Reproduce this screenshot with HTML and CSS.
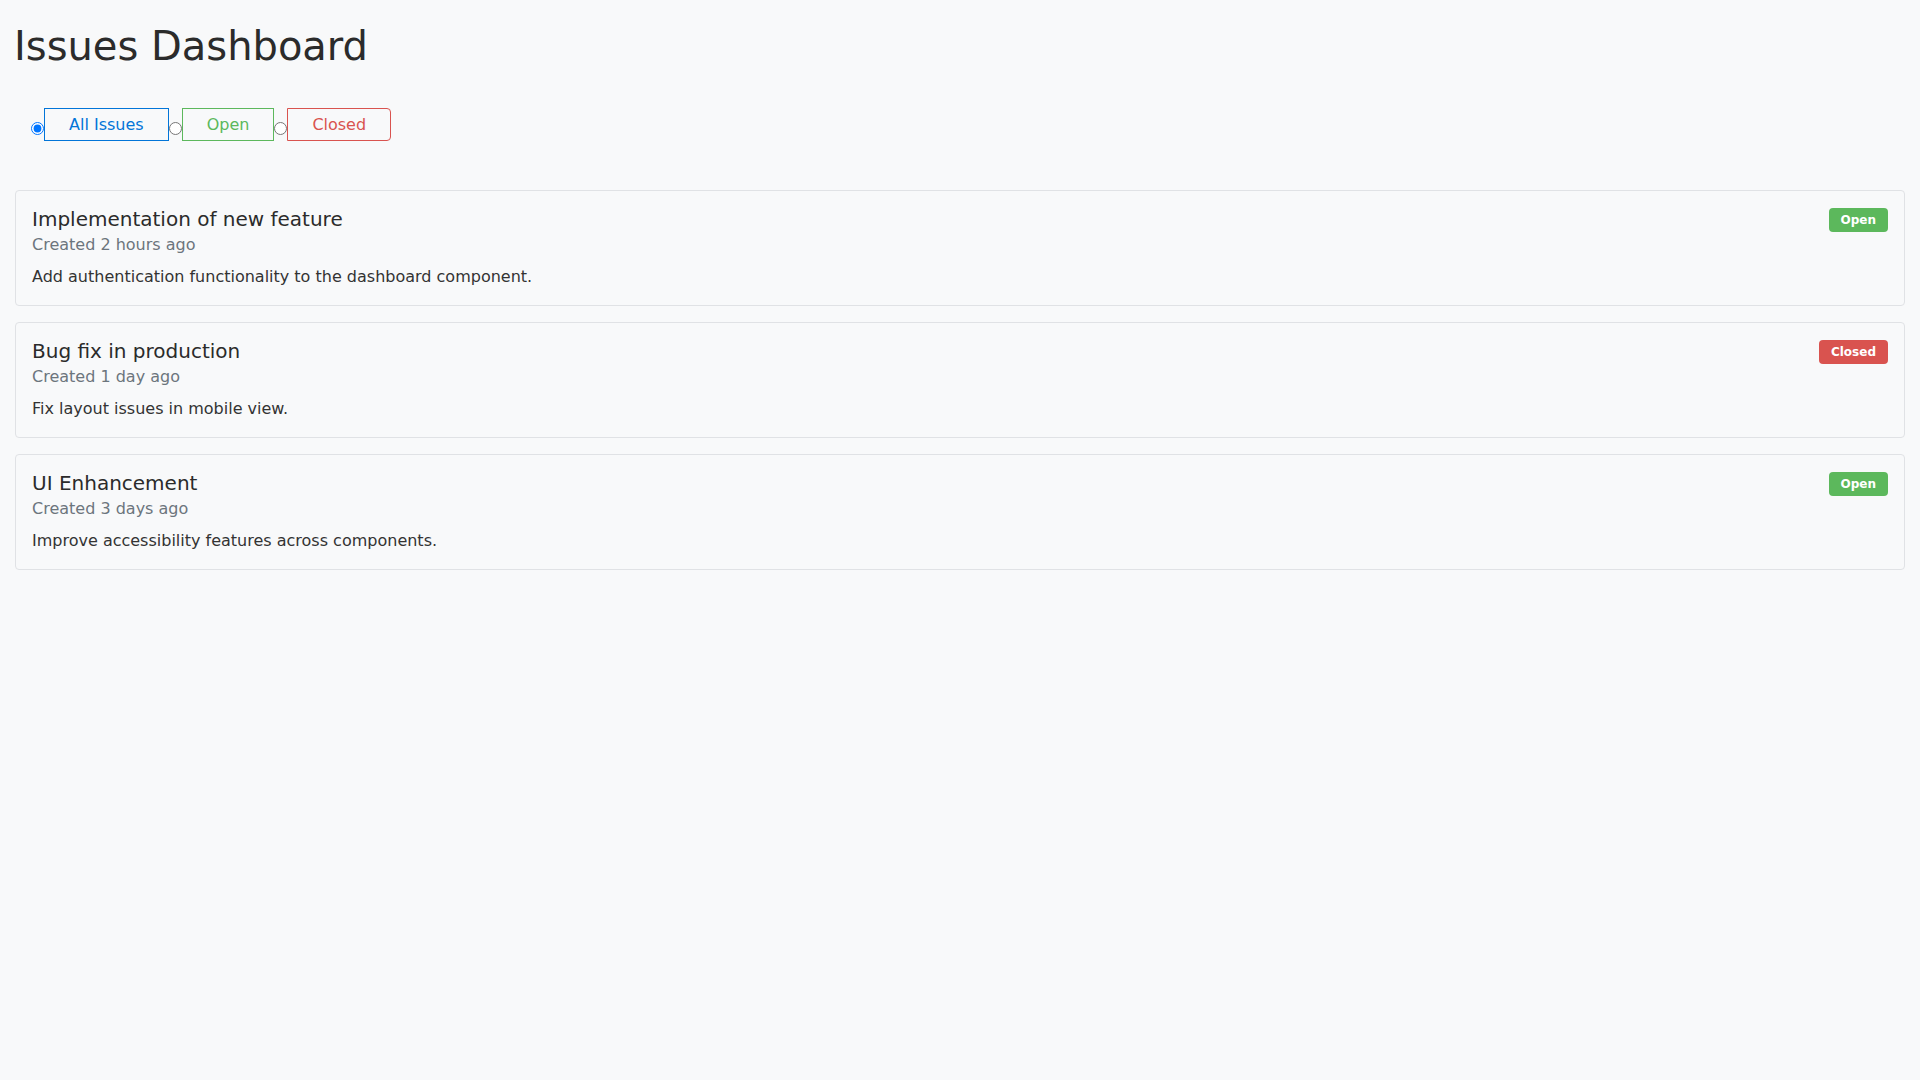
FILE: index.html
```html
<!DOCTYPE html>
<html lang="en">
<head>
<meta charset="utf-8">
<title>Issues Dashboard</title>
<link rel="stylesheet" href="styles.css">
</head>
<body>
<div class="page">
  <h1 class="page-title">Issues Dashboard</h1>

  <div class="filter-group" role="group">
    <input type="radio" class="filter-radio" name="filter" id="f-all" checked>
    <label class="filter-btn filter-btn--primary" for="f-all">All Issues</label>
    <input type="radio" class="filter-radio" name="filter" id="f-open">
    <label class="filter-btn filter-btn--success" for="f-open">Open</label>
    <input type="radio" class="filter-radio" name="filter" id="f-closed">
    <label class="filter-btn filter-btn--danger" for="f-closed">Closed</label>
  </div>

  <div class="issue-list">
    <div class="issue-card">
      <div class="issue-head">
        <h3 class="issue-title">Implementation of new feature</h3>
        <span class="badge badge--open">Open</span>
      </div>
      <p class="issue-meta">Created 2 hours ago</p>
      <p class="issue-desc">Add authentication functionality to the dashboard component.</p>
    </div>

    <div class="issue-card">
      <div class="issue-head">
        <h3 class="issue-title">Bug fix in production</h3>
        <span class="badge badge--closed">Closed</span>
      </div>
      <p class="issue-meta">Created 1 day ago</p>
      <p class="issue-desc">Fix layout issues in mobile view.</p>
    </div>

    <div class="issue-card">
      <div class="issue-head">
        <h3 class="issue-title">UI Enhancement</h3>
        <span class="badge badge--open">Open</span>
      </div>
      <p class="issue-meta">Created 3 days ago</p>
      <p class="issue-desc">Improve accessibility features across components.</p>
    </div>
  </div>
</div>
</body>
</html>
```

FILE: styles.css
```css
html, body {
  margin: 0;
  padding: 0;
  background: #f8f9fa;
}

body {
  font-family: "DejaVu Sans", sans-serif;
  color: #333333;
}

.page {
  padding: 22px 15px 0 15px;
}

.page-title {
  margin: 0 0 22px -1px;
  font-size: 40px;
  line-height: 48px;
  font-weight: 400;
  color: #2b2b2b;
}

.filter-group {
  display: flex;
  align-items: flex-start;
  padding: 16px;
  margin-bottom: 33px;
}

.filter-radio {
  margin: 0 0 6px 0;
  width: 13px;
  height: 13px;
  align-self: flex-end;
  flex: none;
}

.filter-btn {
  display: inline-block;
  padding: 6px 24px;
  font-size: 16px;
  line-height: normal;
  border: 1px solid;
  background: transparent;
  border-radius: 0;
  cursor: pointer;
}

.filter-btn:last-child {
  border-top-right-radius: 4px;
  border-bottom-right-radius: 4px;
}

.filter-btn--primary {
  color: #0275d8;
  border-color: #0275d8;
}

.filter-btn--success {
  color: #5cb85c;
  border-color: #5cb85c;
}

.filter-btn--danger {
  color: #d9534f;
  border-color: #d9534f;
}

.issue-card {
  border: 1px solid #e0e2e5;
  border-radius: 4px;
  padding: 16px;
  margin-bottom: 16px;
  background: #f8f9fa;
}

.issue-head {
  display: flex;
  justify-content: space-between;
  align-items: flex-start;
  margin-bottom: 1px;
}

.issue-title {
  margin: 0;
  font-size: 20px;
  line-height: 24px;
  font-weight: 400;
  color: #2b2b2b;
}

.badge {
  display: inline-block;
  margin-top: 1px;
  padding: 5px 12px;
  font-size: 12px;
  line-height: normal;
  font-weight: 700;
  color: #ffffff;
  border-radius: 4px;
}

.badge--open {
  background: #5cb85c;
}

.badge--closed {
  background: #d9534f;
}

.issue-meta {
  margin: 0 0 8px 0;
  font-size: 16px;
  line-height: 24px;
  color: #6c757d;
}

.issue-desc {
  margin: 0;
  font-size: 16px;
  line-height: 24px;
  color: #333333;
}
```
